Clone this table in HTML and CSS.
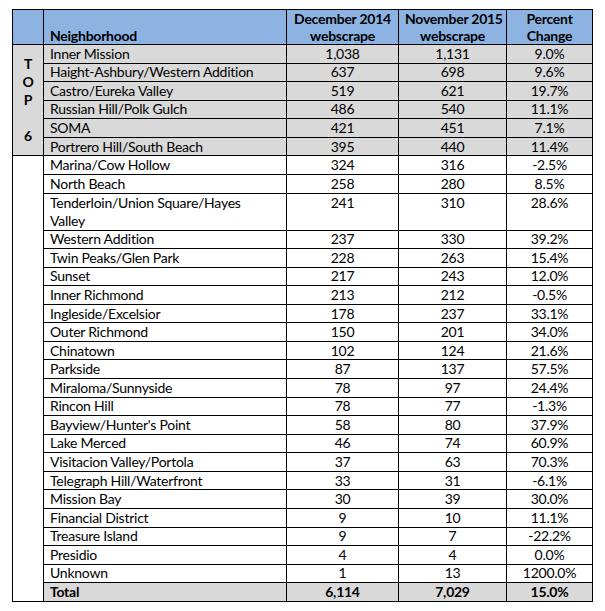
FILE: index.html
```html
<!DOCTYPE html>
<html>
<head>
<meta charset="utf-8">
<link rel="stylesheet" href="styles.css">
</head>
<body>
<table class="data">
  <colgroup>
    <col class="c-rank">
    <col class="c-name">
    <col class="c-dec">
    <col class="c-nov">
    <col class="c-pct">
  </colgroup>
  <thead>
    <tr class="head">
      <th class="rank"></th>
      <th class="name">Neighborhood</th>
      <th>December 2014<br>webscrape</th>
      <th>November 2015<br>webscrape</th>
      <th>Percent<br>Change</th>
    </tr>
  </thead>
  <tbody>
    <tr class="top">
      <td class="rank top-label" rowspan="6">T<br>O<br>P<br><br>6</td>
      <td class="name">Inner Mission</td><td>1,038</td><td>1,131</td><td>9.0%</td>
    </tr>
    <tr class="top"><td class="name">Haight-Ashbury/Western Addition</td><td>637</td><td>698</td><td>9.6%</td></tr>
    <tr class="top"><td class="name">Castro/Eureka Valley</td><td>519</td><td>621</td><td>19.7%</td></tr>
    <tr class="top"><td class="name">Russian Hill/Polk Gulch</td><td>486</td><td>540</td><td>11.1%</td></tr>
    <tr class="top"><td class="name">SOMA</td><td>421</td><td>451</td><td>7.1%</td></tr>
    <tr class="top"><td class="name">Portrero Hill/South Beach</td><td>395</td><td>440</td><td>11.4%</td></tr>
    <tr>
      <td class="rank" rowspan="23"></td>
      <td class="name">Marina/Cow Hollow</td><td>324</td><td>316</td><td>-2.5%</td>
    </tr>
    <tr><td class="name">North Beach</td><td>258</td><td>280</td><td>8.5%</td></tr>
    <tr class="double"><td class="name">Tenderloin/Union Square/Hayes<br>Valley</td><td class="up">241</td><td class="up">310</td><td class="up">28.6%</td></tr>
    <tr><td class="name">Western Addition</td><td>237</td><td>330</td><td>39.2%</td></tr>
    <tr><td class="name">Twin Peaks/Glen Park</td><td>228</td><td>263</td><td>15.4%</td></tr>
    <tr><td class="name">Sunset</td><td>217</td><td>243</td><td>12.0%</td></tr>
    <tr><td class="name">Inner Richmond</td><td>213</td><td>212</td><td>-0.5%</td></tr>
    <tr><td class="name">Ingleside/Excelsior</td><td>178</td><td>237</td><td>33.1%</td></tr>
    <tr><td class="name">Outer Richmond</td><td>150</td><td>201</td><td>34.0%</td></tr>
    <tr><td class="name">Chinatown</td><td>102</td><td>124</td><td>21.6%</td></tr>
    <tr><td class="name">Parkside</td><td>87</td><td>137</td><td>57.5%</td></tr>
    <tr><td class="name">Miraloma/Sunnyside</td><td>78</td><td>97</td><td>24.4%</td></tr>
    <tr><td class="name">Rincon Hill</td><td>78</td><td>77</td><td>-1.3%</td></tr>
    <tr><td class="name">Bayview/Hunter's Point</td><td>58</td><td>80</td><td>37.9%</td></tr>
    <tr><td class="name">Lake Merced</td><td>46</td><td>74</td><td>60.9%</td></tr>
    <tr><td class="name">Visitacion Valley/Portola</td><td>37</td><td>63</td><td>70.3%</td></tr>
    <tr><td class="name">Telegraph Hill/Waterfront</td><td>33</td><td>31</td><td>-6.1%</td></tr>
    <tr><td class="name">Mission Bay</td><td>30</td><td>39</td><td>30.0%</td></tr>
    <tr><td class="name">Financial District</td><td>9</td><td>10</td><td>11.1%</td></tr>
    <tr><td class="name">Treasure Island</td><td>9</td><td>7</td><td>-22.2%</td></tr>
    <tr><td class="name">Presidio</td><td>4</td><td>4</td><td>0.0%</td></tr>
    <tr><td class="name">Unknown</td><td>1</td><td>13</td><td>1200.0%</td></tr>
    <tr class="total"><td class="name">Total</td><td>6,114</td><td>7,029</td><td>15.0%</td></tr>
  </tbody>
</table>
</body>
</html>
```

FILE: styles.css
```css
html, body {
  margin: 0;
  padding: 0;
  background: #ffffff;
}
body {
  padding: 9px 0 0 12px;
  font-family: Lato, "Open Sans", sans-serif;
  font-size: 14px;
  letter-spacing: -0.25px;
  color: #000;
}
.data {
  border-collapse: collapse;
  table-layout: fixed;
  width: 580px;
}
.c-rank { width: 31px; }
.c-name { width: 243px; }
.c-dec { width: 112px; }
.c-nov { width: 108px; }
.c-pct { width: 86px; }

.data th, .data td {
  border: 1px solid #000;
  padding: 0 6px;
  text-align: center;
  line-height: 16px;
  white-space: nowrap;
  overflow: hidden;
}
.data tr { height: 18.57px; }
.data td { vertical-align: middle; }

.head { height: 36px; }
.head th {
  background: #8db3e2;
  font-weight: bold;
  vertical-align: bottom;
  line-height: 17px;
  padding-bottom: 0;
}
.data .name { text-align: left; }
.top td { background: #d9d9d9; }
.total td { background: #d9d9d9; font-weight: bold; }
.data .rank { background: #fff; padding: 0; }
.data .head .rank { background: #8db3e2; }
.data .top-label {
  background: #d9d9d9;
  font-weight: bold;
  line-height: 18px;
  vertical-align: middle;
}
.double { height: 37.14px; }
.double .name { line-height: 18px; }
.data .up { vertical-align: top; padding-top: 1px; }
```
